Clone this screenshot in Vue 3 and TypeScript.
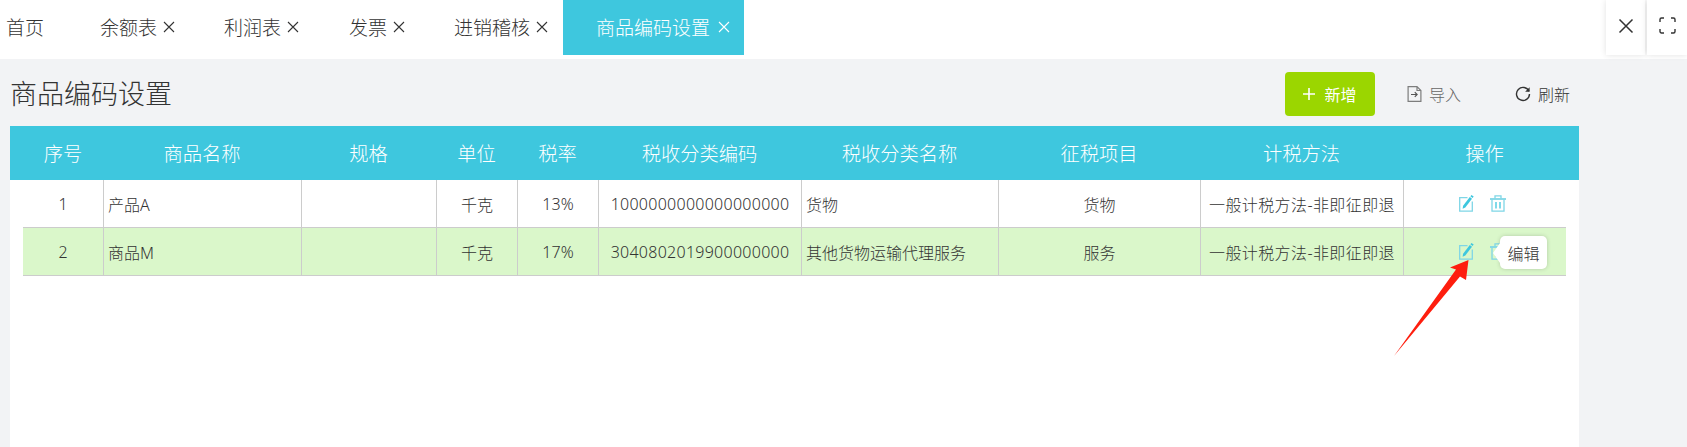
<script setup lang="ts">
interface GoodsRow {
  no: number
  name: string
  spec: string
  unit: string
  rate: string
  code: string
  category: string
  item: string
  method: string
}

const tabs = [
  { label: '余额表', w: 124 },
  { label: '利润表', w: 125 },
  { label: '发票', w: 105 },
  { label: '进销稽核', w: 109 },
]

const columns = ['序号', '商品名称', '规格', '单位', '税率', '税收分类编码', '税收分类名称', '征税项目', '计税方法', '操作']

const rows: GoodsRow[] = [
  { no: 1, name: '产品A', spec: '', unit: '千克', rate: '13%', code: '1000000000000000000', category: '货物', item: '货物', method: '一般计税方法-非即征即退' },
  { no: 2, name: '商品M', spec: '', unit: '千克', rate: '17%', code: '3040802019900000000', category: '其他货物运输代理服务', item: '服务', method: '一般计税方法-非即征即退' },
]
</script>

<template>
  <div class="page">
    <header class="topbar">
      <nav class="tabs">
        <a class="tab tab-home">首页</a>
        <a v-for="t in tabs" :key="t.label" class="tab" :style="{ width: t.w + 'px' }">
          {{ t.label }}
          <svg class="tab-x" width="12" height="12" viewBox="0 0 12 12"><path d="M1 1l10 10M11 1L1 11" /></svg>
        </a>
        <a class="tab tab-active">
          商品编码设置
          <svg class="tab-x" width="12" height="12" viewBox="0 0 12 12"><path d="M1 1l10 10M11 1L1 11" /></svg>
        </a>
      </nav>
      <div class="win-btns">
        <button class="win-btn">
          <svg width="16" height="16" viewBox="0 0 16 16"><path d="M1.500 1.500l13 13M14.500 1.500l-13 13" fill="none" stroke="#333" stroke-width="1.500" /></svg>
        </button>
        <button class="win-btn">
          <svg width="17" height="17" viewBox="0 0 17 17"><path d="M1 5V2.500A1.500 1.500 0 0 1 2.500 1H5M12 1h2.500A1.500 1.500 0 0 1 16 2.500V5M16 12v2.500a1.500 1.500 0 0 1-1.500 1.500H12M5 16H2.500A1.500 1.500 0 0 1 1 14.500V12" fill="none" stroke="#333" stroke-width="1.400" /></svg>
        </button>
      </div>
    </header>

    <main class="panel-wrap">
      <div class="title-row">
        <h1 class="title">商品编码设置</h1>
        <div class="actions">
          <button class="btn-add">
            <svg width="12" height="12" viewBox="0 0 12 12"><path d="M6 0v12M0 6h12" stroke="#fff" stroke-width="1.600" /></svg>
            新增
          </button>
          <a class="act act-import">
            <svg width="15" height="16" viewBox="0 0 15 16" fill="none" stroke="#7d7d7d" stroke-width="1.200">
              <path d="M10 .6H1.100v14.800h12.800V4.500L10 .6zM10 .6v3.900h3.900" />
              <path d="M4 8.500h6M7.800 6.200l2.300 2.300-2.300 2.300" stroke="#555" />
            </svg>
            导入
          </a>
          <a class="act act-refresh">
            <svg width="16" height="16" viewBox="0 0 16 16" fill="none">
              <path d="M13.900 5.200A6.500 6.500 0 1 0 14.500 8" stroke="#333" stroke-width="1.400" />
              <path d="M14.600 1.300v4.500h-4.500z" fill="#333" />
            </svg>
            刷新
          </a>
        </div>
      </div>

      <section class="panel">
        <div class="grid-head">
          <div v-for="c in columns" :key="c" class="head-cell">{{ c }}</div>
        </div>
        <div v-for="(r, i) in rows" :key="r.no" class="grid-row" :class="{ active: i === 1 }">
          <div class="cell center first">{{ r.no }}</div>
          <div class="cell">{{ r.name }}</div>
          <div class="cell">{{ r.spec }}</div>
          <div class="cell center">{{ r.unit }}</div>
          <div class="cell center">{{ r.rate }}</div>
          <div class="cell center code">{{ r.code }}</div>
          <div class="cell">{{ r.category }}</div>
          <div class="cell center">{{ r.item }}</div>
          <div class="cell center method">{{ r.method }}</div>
          <div class="cell ops">
            <span class="op-wrap">
              <svg width="15" height="17" viewBox="0 0 15 17" fill="none">
                <path d="M8.500 2.700H.7v13.500h12.600V6.500" stroke="#7fd6e6" stroke-width="1.300" />
                <path d="M3.600 13.800l.5-3 6.700-8.700 2.200 1.700-6.700 8.700z" fill="#3ec7de" />
                <path d="M11.400 1.300l2.200 1.700 1.100-1.500L12.500 0z" fill="#3ec7de" />
              </svg>
            </span>
            <span class="op-wrap">
              <svg width="16" height="17" viewBox="0 0 16 17" fill="none" stroke="#7fd6e6" stroke-width="1.300">
                <path d="M0 4h16" stroke-width="1.800" />
                <path d="M5 3.600V.8h6v2.800M2 4.500v11.700h12V4.500" />
                <path d="M6 7v6.500M10 7v6.500" stroke="#3ec7de" />
              </svg>
            </span>
            <div v-if="i === 1" class="tooltip">编辑</div>
          </div>
        </div>
      </section>
    </main>

    <svg class="arrow" width="90" height="110" viewBox="1390 255 90 110">
      <path d="M1468.500 260 1450 267.500 1456 269.500 1394 356 1460 276.500 1466 280z" fill="#fe1e0e" />
    </svg>
  </div>
</template>

<style scoped>
.page {
  position: relative;
  width: 1687px;
  height: 447px;
  overflow: hidden;
  background: #f2f3f5;
  color: #333;
  font-family: "Noto Sans", "Noto Sans CJK SC", sans-serif;
  font-weight: 300;
}
.topbar {
  display: flex;
  justify-content: space-between;
  height: 55px;
  padding-bottom: 4px;
  background: #fff;
}
.tabs { display: flex; }
.tab {
  display: flex;
  align-items: center;
  gap: 6px;
  height: 55px;
  padding-bottom: 2px;
  box-sizing: border-box;
  font-size: 19px;
  color: #333;
  white-space: nowrap;
}
.tab-home { width: 100px; padding-left: 6px; }
.tab-x { stroke: currentColor; stroke-width: 1.100; fill: none; }
.tab-active {
  width: 181px;
  gap: 8px;
  justify-content: flex-end;
  padding-right: 14px;
  color: #fff;
  background: #3ec7de;
}
.win-btns { display: flex; gap: 2px; height: 55px; }
.win-btn {
  width: 39px;
  height: 55px;
  padding: 0 0 4px;
  border: 0;
  background: #fff;
  box-shadow: 0 0 6px rgba(0, 0, 0, 0.12);
  display: flex;
  align-items: center;
  justify-content: center;
}
.win-btn:last-child { width: 40px; }

.panel-wrap { width: 1579px; }
.title-row {
  display: flex;
  justify-content: space-between;
  height: 67px;
  padding: 13px 9px 10px 10px;
  box-sizing: border-box;
}
.title {
  margin: 0;
  font-size: 27px;
  font-weight: 300;
  line-height: 44px;
  color: #333;
}
.actions { display: flex; align-items: center; }
.btn-add {
  display: flex;
  align-items: center;
  justify-content: center;
  gap: 9px;
  width: 90px;
  height: 44px;
  margin-right: 32px;
  border: 0;
  border-radius: 4px;
  background: #9bd600;
  color: #fff;
  font: inherit;
  font-size: 16px;
  font-weight: 400;
}
.act {
  display: flex;
  align-items: center;
  gap: 7px;
  font-size: 16px;
  color: #666;
}
.act-import { margin-right: 54px; }
.act-refresh { color: #333; }

.panel {
  height: 321px;
  margin-left: 10px;
  background: #fff;
}
.grid-head,
.grid-row {
  display: grid;
  grid-template-columns: 80px 198px 135px 81px 81px 203px 197px 202px 203px 163px;
}
.grid-head {
  height: 54px;
  padding: 0 13px;
  background: #3ec7de;
}
.head-cell {
  display: flex;
  align-items: center;
  justify-content: center;
  font-size: 19.300px;
  color: #fff;
}
.grid-row {
  height: 48px;
  margin: 0 13px;
  border-bottom: 1px solid #ccc;
  box-sizing: border-box;
}
.grid-row.active { background: #daf7ca; }
.cell {
  display: flex;
  align-items: center;
  padding-left: 4px;
  border-left: 1px solid #ccc;
  box-sizing: border-box;
  font-size: 16px;
  color: #333;
  white-space: nowrap;
}
.cell.first { border-left: 0; }
.cell.center { justify-content: center; padding-left: 0; }
.cell.code { letter-spacing: 0.270px; }
.cell.method { letter-spacing: 0.400px; }
.cell.ops {
  position: relative;
  gap: 16px;
  padding-left: 55px;
}
.op-wrap { display: flex; }
.tooltip {
  position: absolute;
  left: 96px;
  top: 8px;
  width: 47px;
  height: 33px;
  display: flex;
  align-items: center;
  justify-content: center;
  background: #fff;
  border-radius: 5px;
  box-shadow: 0 0 4px rgba(0, 0, 0, 0.18);
  font-size: 16px;
  color: #333;
}
.tooltip::before {
  content: "";
  position: absolute;
  left: -7px;
  top: 7px;
  border-style: solid;
  border-width: 10px 7px 10px 0;
  border-color: transparent #fff transparent transparent;
}
.arrow {
  position: absolute;
  left: 1390px;
  top: 255px;
}
</style>
